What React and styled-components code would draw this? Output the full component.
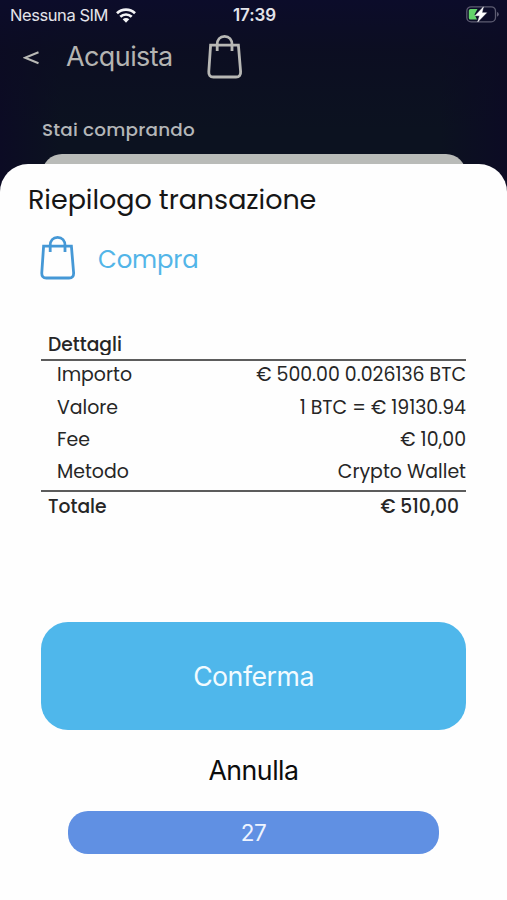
import React from 'react';
import styled, { createGlobalStyle } from 'styled-components';

const GlobalStyle = createGlobalStyle`
  * {
    box-sizing: border-box;
  }

  body {
    margin: 0;
    font-family: Inter, "Liberation Sans", sans-serif;
  }
`;

const Screen = styled.div`
  display: flex;
  flex-direction: column;
  width: 507px;
  height: 900px;
  overflow: hidden;
  background:
    linear-gradient(180deg, #0c0c2a 0px, rgba(12, 12, 34, 0.7) 50px, rgba(12, 12, 34, 0) 130px),
    linear-gradient(90deg, #0c0b24 0px, #0c1220 60px, #0c1220 440px, #0c0b24 507px);
`;

const StatusBar = styled.div`
  display: grid;
  grid-template-columns: 1fr auto 1fr;
  align-items: center;
  height: 30px;
  padding: 0 8px 0 10px;
  color: #e4e4ea;
`;

const Carrier = styled.div`
  display: flex;
  align-items: center;
  gap: 8px;
`;

const Battery = styled.div`
  display: flex;
  justify-content: flex-end;
  padding-bottom: 2px;
`;

const Header = styled.header`
  display: flex;
  align-items: center;
  height: 54px;
  padding-left: 23px;
`;

const BackSlot = styled.div`
  display: flex;
  width: 43px;
  padding-top: 2px;
`;

const TitleSlot = styled.div`
  width: 140.5px;
  padding-bottom: 2px;
`;

const Text = styled.span`
  display: block;
  white-space: nowrap;
  font-size: ${(props) => props.$size}px;
  font-weight: ${(props) => props.$weight || 400};
  line-height: ${(props) => props.$line || props.$size}px;
  letter-spacing: ${(props) => props.$spacing || 0}px;
  color: ${(props) => props.$color || 'inherit'};
`;

const RoundText = styled(Text)`
  font-family: Poppins, Inter, sans-serif;
`;

const Background = styled.div`
  display: flex;
  flex-direction: column;
  height: 80px;
  padding: 36px 41px 0 42px;
`;

const AmountCard = styled.div`
  flex: none;
  height: 40px;
  margin-top: 14px;
  border-radius: 20px;
  background: #b9bbb8;
`;

const Sheet = styled.section`
  position: relative;
  display: flex;
  flex-direction: column;
  flex: 1;
  border-radius: 28px 28px 0 0;
  background: #fefefe;
  color: #161616;
`;

const SheetTitle = styled.div`
  padding: 21px 0 0 28px;
`;

const Operation = styled.div`
  display: flex;
  align-items: center;
  gap: 22px;
  height: 46px;
  margin: 20px 0 0 40px;
`;

const OperationName = styled.div`
  padding-top: 3px;
`;

const Details = styled.div`
  margin: 52px 41px 0;
  color: #262626;
`;

const DetailsHeading = styled.div`
  height: 28px;
  padding: 0 7px;
  border-bottom: 2px solid #5c5c5c;
`;

const Clip = styled.div`
  height: 22px;
  padding-top: 1px;
  overflow: hidden;
`;

const Rows = styled.div`
  height: 131px;
  border-bottom: 2px solid #5c5c5c;
`;

const Row = styled.div`
  display: flex;
  align-items: center;
  justify-content: space-between;
  height: 32.4px;
  padding: 0 ${(props) => (props.$total ? 7 : 0)}px ${(props) => (props.$total ? 2 : 3)}px ${(props) => (props.$total ? 7 : 16)}px;
`;

const Actions = styled.div`
  display: flex;
  flex-direction: column;
  align-items: center;
  margin-top: 98px;
`;

const ConfirmButton = styled.button`
  display: flex;
  align-items: center;
  justify-content: center;
  width: 425px;
  height: 107.5px;
  padding: 0;
  border: none;
  border-radius: 27px;
  background: #4fb7eb;
  color: #f2fbff;
  font-family: inherit;
`;

const CancelButton = styled.button`
  display: flex;
  align-items: center;
  justify-content: center;
  height: 81px;
  padding: 0;
  border: none;
  background: none;
  color: #0c0c0c;
  font-family: inherit;
`;

const Countdown = styled.div`
  display: flex;
  align-items: center;
  justify-content: center;
  width: 371px;
  height: 43px;
  padding-top: 2px;
  border-radius: 20px;
  background: #6090e3;
  color: #eef4ff;
`;

const details = [
  { label: 'Importo', value: '€ 500.00 0.026136 BTC' },
  { label: 'Valore', value: '1 BTC = € 19130.94' },
  { label: 'Fee', value: '€ 10,00' },
  { label: 'Metodo', value: 'Crypto Wallet' },
];

const BagIcon = ({ color }) => (
  <svg width="36" height="46" viewBox="0 0 36 46" fill="none" stroke={color} strokeWidth="2.8">
    <path d="M3.6 11.2H31.4L33.6 37.5Q34 43 29 43H6.4Q1.4 43 1.8 37.5Z" />
    <path d="M10.2 17V10.5C10.2 5.5 13 2.4 17.6 2.4S25 5.5 25 10.5V17" />
  </svg>
);

const WifiIcon = () => (
  <svg width="20" height="15" viewBox="0 0 20 15" fill="none" stroke="#f4f4f6" strokeWidth="2.7">
    <path d="M1 5.3C6 .4 14 .4 19 5.3" />
    <path d="M4.3 8.8C7.6 5.7 12.4 5.7 15.7 8.8" />
    <path d="M6.7 11.2C8.6 9.5 11.4 9.5 13.3 11.2L10 14.7Z" fill="#f4f4f6" stroke="none" />
  </svg>
);

const BatteryIcon = () => (
  <svg width="33" height="17" viewBox="0 0 33 17">
    <rect x="0.8" y="0.8" width="28.7" height="15" rx="4.3" fill="none" stroke="#5d5c72" strokeWidth="1.3" />
    <path d="M31 6Q32.8 6.3 32.8 8.3T31 10.7Z" fill="#5d5c72" />
    <path d="M4.5 3H11.5L8.5 8.5L11 13.5H4.5Q2.8 13.5 2.8 12V4.6Q2.8 3 4.5 3Z" fill="#63d46a" />
    <path d="M17.5 0.8L9 9.7H13.5L11.7 16L20.7 6.7H16Z" fill="#fff" stroke="#fff" strokeWidth="0.4" />
  </svg>
);

const App = () => {
  return (
    <>
      <GlobalStyle />
      <Screen>
        <StatusBar>
          <Carrier>
            <Text $size={16.5} $line={18} $spacing={-0.43}>Nessuna SIM</Text>
            <WifiIcon />
          </Carrier>
          <Text $size={17} $line={19} $weight={600} $spacing={-0.1}>17:39</Text>
          <Battery>
            <BatteryIcon />
          </Battery>
        </StatusBar>
        <Header>
          <BackSlot>
            <svg width="16" height="16" viewBox="0 0 16 16" fill="none" stroke="#b9b9b6" strokeWidth="2">
              <path d="M15.5 2.2L2 7.7L15.5 13.2" />
            </svg>
          </BackSlot>
          <TitleSlot>
            <Text $size={27} $spacing={-0.6} $color="#b4b4b2">Acquista</Text>
          </TitleSlot>
          <BagIcon color="#b8b8b5" />
        </Header>
        <Background>
          <RoundText $size={18.4} $line={20} $weight={500} $spacing={0.2} $color="#b4b6b8">Stai comprando</RoundText>
          <AmountCard />
        </Background>
        <Sheet>
          <SheetTitle>
            <RoundText $size={27} $line={30} $spacing={-0.05}>Riepilogo transazione</RoundText>
          </SheetTitle>
          <Operation>
            <BagIcon color="#4598d6" />
            <OperationName>
              <RoundText $size={24.3} $line={24} $spacing={-0.1} $color="#52b5e8">Compra</RoundText>
            </OperationName>
          </Operation>
          <Details>
            <DetailsHeading>
              <Clip>
                <RoundText $size={18.7} $line={22} $weight={500}>Dettagli</RoundText>
              </Clip>
            </DetailsHeading>
            <Rows>
              {details.map((item) => (
                <Row key={item.label}>
                  <RoundText $size={18.9}>{item.label}</RoundText>
                  <RoundText $size={18.9}>{item.value}</RoundText>
                </Row>
              ))}
            </Rows>
            <Row $total>
              <RoundText $size={18.7} $weight={500}>Totale</RoundText>
              <RoundText $size={18.7} $weight={500}>€ 510,00</RoundText>
            </Row>
          </Details>
          <Actions>
            <ConfirmButton>
              <Text $size={26.7} $spacing={-0.5}>Conferma</Text>
            </ConfirmButton>
            <CancelButton>
              <Text $size={26.7} $spacing={-0.5}>Annulla</Text>
            </CancelButton>
            <Countdown>
              <Text $size={22.5} $spacing={-0.5}>27</Text>
            </Countdown>
          </Actions>
        </Sheet>
      </Screen>
    </>
  );
};

export default App;
